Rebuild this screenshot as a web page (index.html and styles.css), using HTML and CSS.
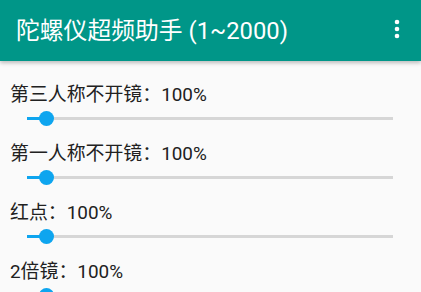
FILE: index.html
```html
<!DOCTYPE html>
<html lang="zh">
<head>
<meta charset="utf-8">
<link rel="stylesheet" href="styles.css">
</head>
<body>
<header class="toolbar">
  <div class="title">陀螺仪超频助手 (1~2000)</div>
  <svg class="menu" width="6" height="20" viewBox="0 0 6 20"><circle cx="3" cy="3" r="2.3" fill="#fff"/><circle cx="3" cy="10" r="2.3" fill="#fff"/><circle cx="3" cy="17" r="2.3" fill="#fff"/></svg>
</header>
<main class="list">
  <div class="row">
    <div class="label">第三人称不开镜：100%</div>
    <div class="slider"><div class="fill"></div><div class="thumb"></div></div>
  </div>
  <div class="row">
    <div class="label">第一人称不开镜：100%</div>
    <div class="slider"><div class="fill"></div><div class="thumb"></div></div>
  </div>
  <div class="row">
    <div class="label">红点：100%</div>
    <div class="slider"><div class="fill"></div><div class="thumb"></div></div>
  </div>
  <div class="row">
    <div class="label">2倍镜：100%</div>
    <div class="slider"><div class="fill"></div><div class="thumb"></div></div>
  </div>
</main>
</body>
</html>
```
FILE: styles.css
```css
html, body {
  margin: 0;
  padding: 0;
  background: #fafafa;
  overflow: hidden;
  height: 292px;
  font-family: Roboto, "Noto Sans CJK SC", sans-serif;
}
.toolbar {
  height: 61px;
  background: #009688;
  display: flex;
  align-items: center;
  justify-content: space-between;
  padding: 0 21px 0 16px;
  box-shadow: 0 2px 4px rgba(0,0,0,0.25);
  position: relative;
  z-index: 1;
}
.title {
  color: #fff;
  font-size: 23.8px;
  line-height: 30px;
  margin-top: 1px;
}
.menu {
  display: block;
  margin-top: -4px;
}
.list {
  padding-top: 23px;
}
.row {
  height: 59px;
  padding-left: 10px;
}
.label {
  font-size: 18.9px;
  line-height: 22px;
  color: #212121;
}
.slider {
  position: relative;
  height: 3px;
  margin: 11px 0 0 17px;
  width: 366px;
  background: #d6d6d6;
}
.fill {
  width: 19px;
  height: 3px;
  background: #0ea5ef;
}
.thumb {
  position: absolute;
  left: 12px;
  top: -6px;
  width: 15px;
  height: 15px;
  border-radius: 50%;
  background: #0ea5ef;
}
```
